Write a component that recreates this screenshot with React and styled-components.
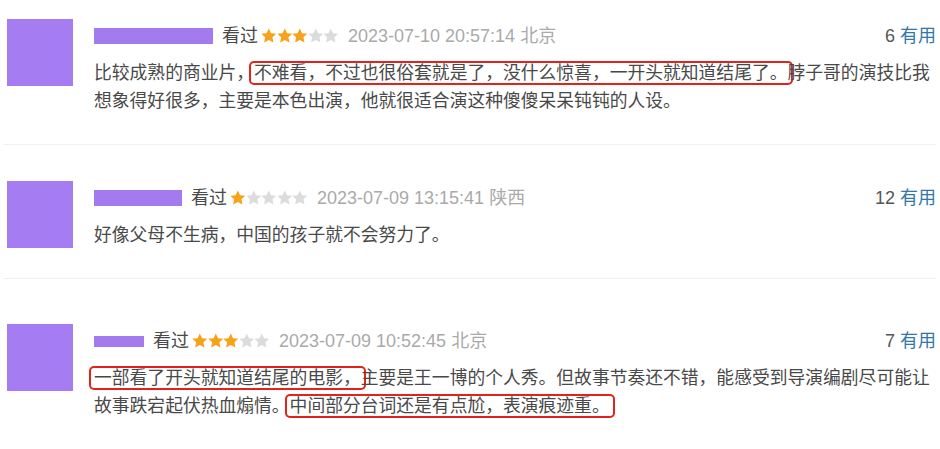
import React from 'react'
import styled, { createGlobalStyle } from 'styled-components'

const GlobalStyle = createGlobalStyle`
  html, body {
    margin: 0;
    padding: 0;
    background: #fff;
  }
  body {
    font-family: "Liberation Sans", "Noto Sans CJK SC", sans-serif;
    color: #494949;
  }
`

const comments = [
  {
    nameWidth: 119,
    rating: 3,
    time: '2023-07-10 20:57:14',
    place: '北京',
    votes: 6,
    top: 19,
    parts: [
      { t: '比较成熟的商业片，' },
      { t: '不难看，不过也很俗套就是了，没什么惊喜，一开头就知道结尾了。', mark: true },
      { t: '脖子哥的演技比我想象得好很多，主要是本色出演，他就很适合演这种傻傻呆呆钝钝的人设。' },
    ],
  },
  {
    nameWidth: 88,
    rating: 1,
    time: '2023-07-09 13:15:41',
    place: '陕西',
    votes: 12,
    top: 36,
    parts: [{ t: '好像父母不生病，中国的孩子就不会努力了。' }],
  },
  {
    nameWidth: 50,
    nameHeight: 11,
    rating: 3,
    time: '2023-07-09 10:52:45',
    place: '北京',
    votes: 7,
    top: 45,
    parts: [
      { t: '一部看了开头就知道结尾的电影，', mark: true },
      { t: '主要是王一博的个人秀。但故事节奏还不错，能感受到导演编剧尽可能让故事跌宕起伏热血煽情。' },
      { t: '中间部分台词还是有点尬，表演痕迹重。', mark: true },
    ],
  },
]

const Star = ({ on }) => (
  <StarSvg viewBox="0 0 24 24" $on={on}>
    <path d="M12 0.6l3.5 7.3 8 1-5.9 5.5 1.6 7.9L12 18.4l-7.2 3.9 1.6-7.9L.5 8.9l8-1z" />
  </StarSvg>
)

const App = () => (
  <>
    <GlobalStyle />
    <List>
      {comments.map((c, i) => (
        <Item key={i} $top={c.top} $last={i === comments.length - 1}>
          <Avatar />
          <Content>
            <Header>
              <Name $w={c.nameWidth} $h={c.nameHeight || 16} />
              <Watched>看过</Watched>
              <Stars>
                {[1, 2, 3, 4, 5].map((n) => (
                  <Star key={n} on={n <= c.rating} />
                ))}
              </Stars>
              <Time>
                {c.time} {c.place}
              </Time>
              <Votes>
                {c.votes} <Useful>有用</Useful>
              </Votes>
            </Header>
            <Body>
              {c.parts.map((p, j) =>
                p.mark ? <Mark key={j}>{p.t}</Mark> : <span key={j}>{p.t}</span>
              )}
            </Body>
          </Content>
        </Item>
      ))}
    </List>
  </>
)

export default App

const List = styled.div`
  padding: 0 4px;
  width: 932px;
`

const Item = styled.div`
  display: flex;
  align-items: flex-start;
  padding: ${(p) => p.$top}px 0 ${(p) => (p.$last ? 40 : 29)}px 3px;
  border-bottom: ${(p) => (p.$last ? 'none' : '1px solid #efefef')};
`

const Avatar = styled.div`
  width: 66px;
  height: 67px;
  flex: none;
  background: #a57cf1;
`

const Content = styled.div`
  flex: 1;
  margin-left: 21px;
  padding-top: 5px;
`

const Header = styled.div`
  display: flex;
  align-items: center;
  height: 24px;
  font-size: 18px;
  line-height: 24px;
`

const Name = styled.span`
  display: inline-block;
  width: ${(p) => p.$w}px;
  height: ${(p) => p.$h}px;
  background: #a37bef;
  margin-right: 9px;
`

const Watched = styled.span`
  color: #494949;
  margin-right: 3px;
`

const Stars = styled.span`
  display: inline-flex;
  align-items: center;
  margin-right: 9px;
`

const StarSvg = styled.svg`
  width: 15.6px;
  height: 15.6px;
  fill: ${(p) => (p.$on ? '#f7a21a' : '#dcdcdc')};
`

const Time = styled.span`
  color: #aaa;
`

const Votes = styled.span`
  margin-left: auto;
  color: #555;
`

const Useful = styled.span`
  color: #3377aa;
`

const Body = styled.div`
  margin-top: 11px;
  font-size: 17.8px;
  line-height: 28px;
  color: #494949;
`

const Mark = styled.span`
  border-radius: 3px;
  padding: 0 3px;
  margin: 0 -3px;
  box-shadow: 0 0 0 2px #e2231a;
`
